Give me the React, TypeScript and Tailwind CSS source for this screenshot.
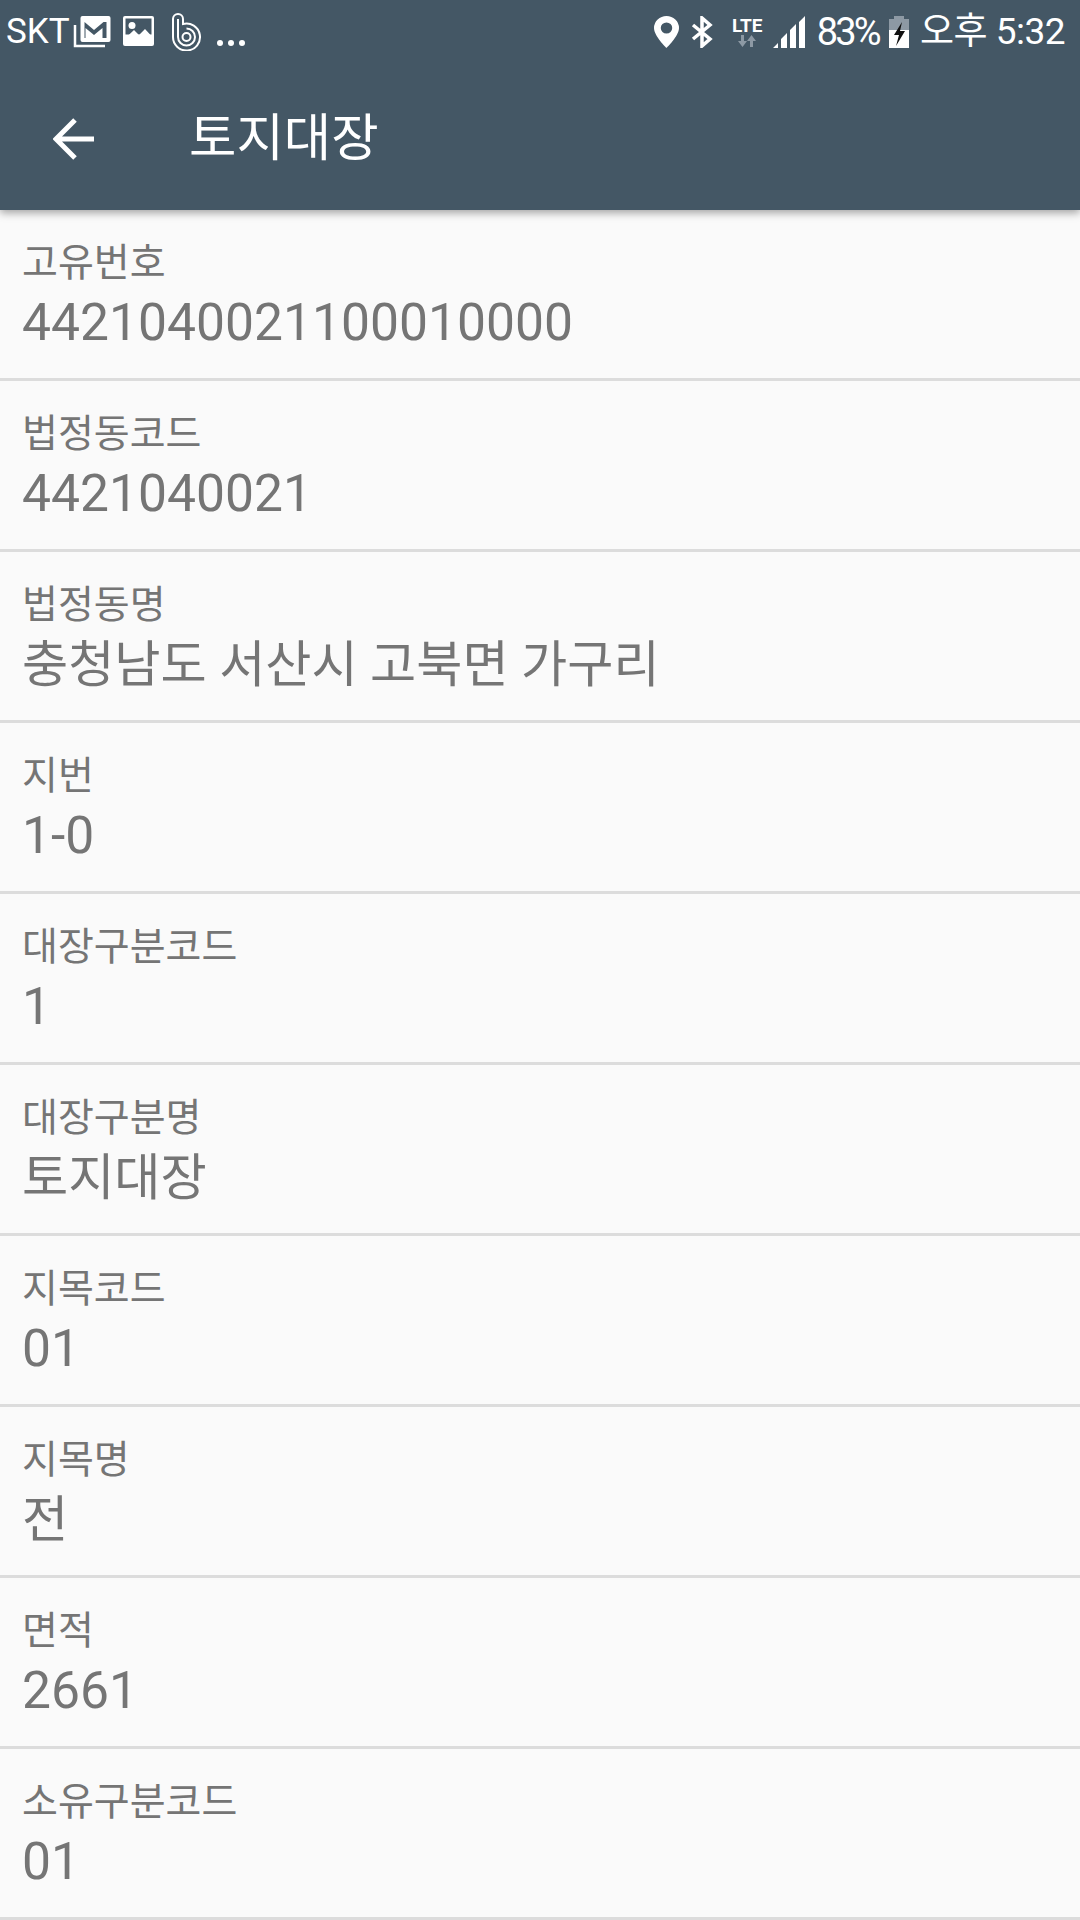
const rows = [
  ['고유번호', '4421040021100010000'],
  ['법정동코드', '4421040021'],
  ['법정동명', '충청남도 서산시 고북면 가구리'],
  ['지번', '1-0'],
  ['대장구분코드', '1'],
  ['대장구분명', '토지대장'],
  ['지목코드', '01'],
  ['지목명', '전'],
  ['면적', '2661'],
  ['소유구분코드', '01'],
];

function StatusBar() {
  return (
    <div className="flex h-[63px] items-center justify-between pl-[6px] pr-[15px] text-white">
      <div className="flex items-center">
        <span className="text-[35px] leading-none">SKT</span>
        <svg width="38" height="32" viewBox="0 0 37 32" className="ml-[3px]">
          <path d="M1.500 9v21h30" fill="none" stroke="#fff" strokeWidth="2.500" />
          <rect x="7" y="0" width="30" height="26" rx="2" fill="#fff" />
          <path d="M11 22V6l9.500 8L30 6h3v16h-4V12l-8.500 7L12 12v10z" fill="#445765" />
        </svg>
        <svg width="31" height="31" viewBox="0 0 31 31" className="ml-[12px]">
          <rect x="0" y="0" width="31" height="30" rx="2" fill="#fff" />
          <rect x="2.500" y="2.500" width="26" height="16" fill="#445765" />
          <circle cx="9" cy="9.500" r="3.500" fill="#fff" />
          <path d="M2.500 22 L11 14 L16 19 L22 13 L28.500 20 V27 H2.500Z" fill="#fff" />
        </svg>
        <svg width="32" height="38" viewBox="0 0 32 38" className="ml-[16px]" fill="none" stroke="#fff" strokeWidth="2">
          <path d="M3 24V6a5 5 0 0 1 10 0v5A13.500 13.500 0 1 1 3 24" />
          <path d="M8 6v18A8.500 8.500 0 1 0 16.500 15.500" />
          <circle cx="16.500" cy="24" r="4" />
        </svg>
        <span className="ml-[15px] flex gap-[5px] pt-[22px]">
          <i className="size-[6px] rounded-full bg-white" />
          <i className="size-[6px] rounded-full bg-white" />
          <i className="size-[6px] rounded-full bg-white" />
        </span>
      </div>
      <div className="flex items-center">
        <svg width="25" height="32" viewBox="0 0 24 32" preserveAspectRatio="none">
          <path fillRule="evenodd" d="M12 0a12 12 0 0 1 12 12c0 8-12 20-12 20S0 20 0 12A12 12 0 0 1 12 0zm0 6.500a5.500 5.500 0 1 0 0 11 5.500 5.500 0 0 0 0-11z" fill="#fff" />
        </svg>
        <svg width="22" height="32" viewBox="0 0 22 32" className="ml-[12px]" fill="none" stroke="#fff" strokeWidth="3.500">
          <path d="M2 9l17 14-8 7V2l8 7L2 23" />
        </svg>
        <div className="ml-[17px] flex w-[35px] flex-col items-center">
          <span className="text-[19px] font-bold leading-[18px]">LTE</span>
          <svg width="20" height="12" viewBox="0 0 20 12" fill="#8d99a4">
            <path d="M4 0h3v6h3l-4.500 6L1 6h3zM13 12h3V6h3l-4.500-6L10 6h3z" />
          </svg>
        </div>
        <svg width="32" height="32" viewBox="0 0 32 32" className="ml-[8px]" fill="#fff">
          <path d="M0 32l5-5v5zM8 32V23l6-6v15zM17 32V14l6-6v24zM26 32V6l6-6v32z" />
        </svg>
        <span className="ml-[12px] text-[38px] leading-none tracking-[-2.800px]">83%</span>
        <svg width="20" height="32" viewBox="0 0 20 32" className="ml-[10px]">
          <rect x="5" y="0" width="10" height="3" fill="#8d99a4" />
          <rect x="0" y="3" width="20" height="11" fill="#8d99a4" />
          <rect x="0" y="14" width="20" height="18" fill="#fff" />
          <path d="M13 6L5 19h5l-3 11 9-15h-5l2-9z" fill="#111" />
        </svg>
        <span className="ml-[11px] text-[37px] leading-none tracking-[-0.500px]">오후 5:32</span>
      </div>
    </div>
  );
}

export default function App() {
  return (
    <div className="h-[1920px] w-[1080px] overflow-hidden bg-[#fafafa] font-['Roboto','Noto_Sans_CJK_KR',sans-serif]">
      <div className="relative z-10 h-[210px] bg-[#445765] shadow-[0_3px_8px_rgba(0,0,0,0.35)]">
        <StatusBar />
        <div className="flex h-[147px] items-center pt-[4px] text-white">
          <svg width="42" height="42" viewBox="0 0 42 42" className="ml-[53px]" fill="none" stroke="#fff" strokeWidth="5">
            <path d="M41 21H4M22 2L3 21l19 19" />
          </svg>
          <span className="ml-[94px] text-[51.500px] leading-none">토지대장</span>
        </div>
      </div>
      {rows.map(([label, value]) => {
        const isKorean = /[가-힣]/.test(value);
        return (
          <div key={label} className="flex h-[171px] flex-col border-b-[3px] border-[#dcdcdc] pl-[22px] pt-[26px]">
            <span className="text-[39px] leading-[54px] text-[#757575]">{label}</span>
            <span className={isKorean ? 'text-[50.200px] leading-[66px] text-[#757575]' : 'text-[51.600px] leading-[66px] text-[#757575]'}>{value}</span>
          </div>
        );
      })}
    </div>
  );
}
